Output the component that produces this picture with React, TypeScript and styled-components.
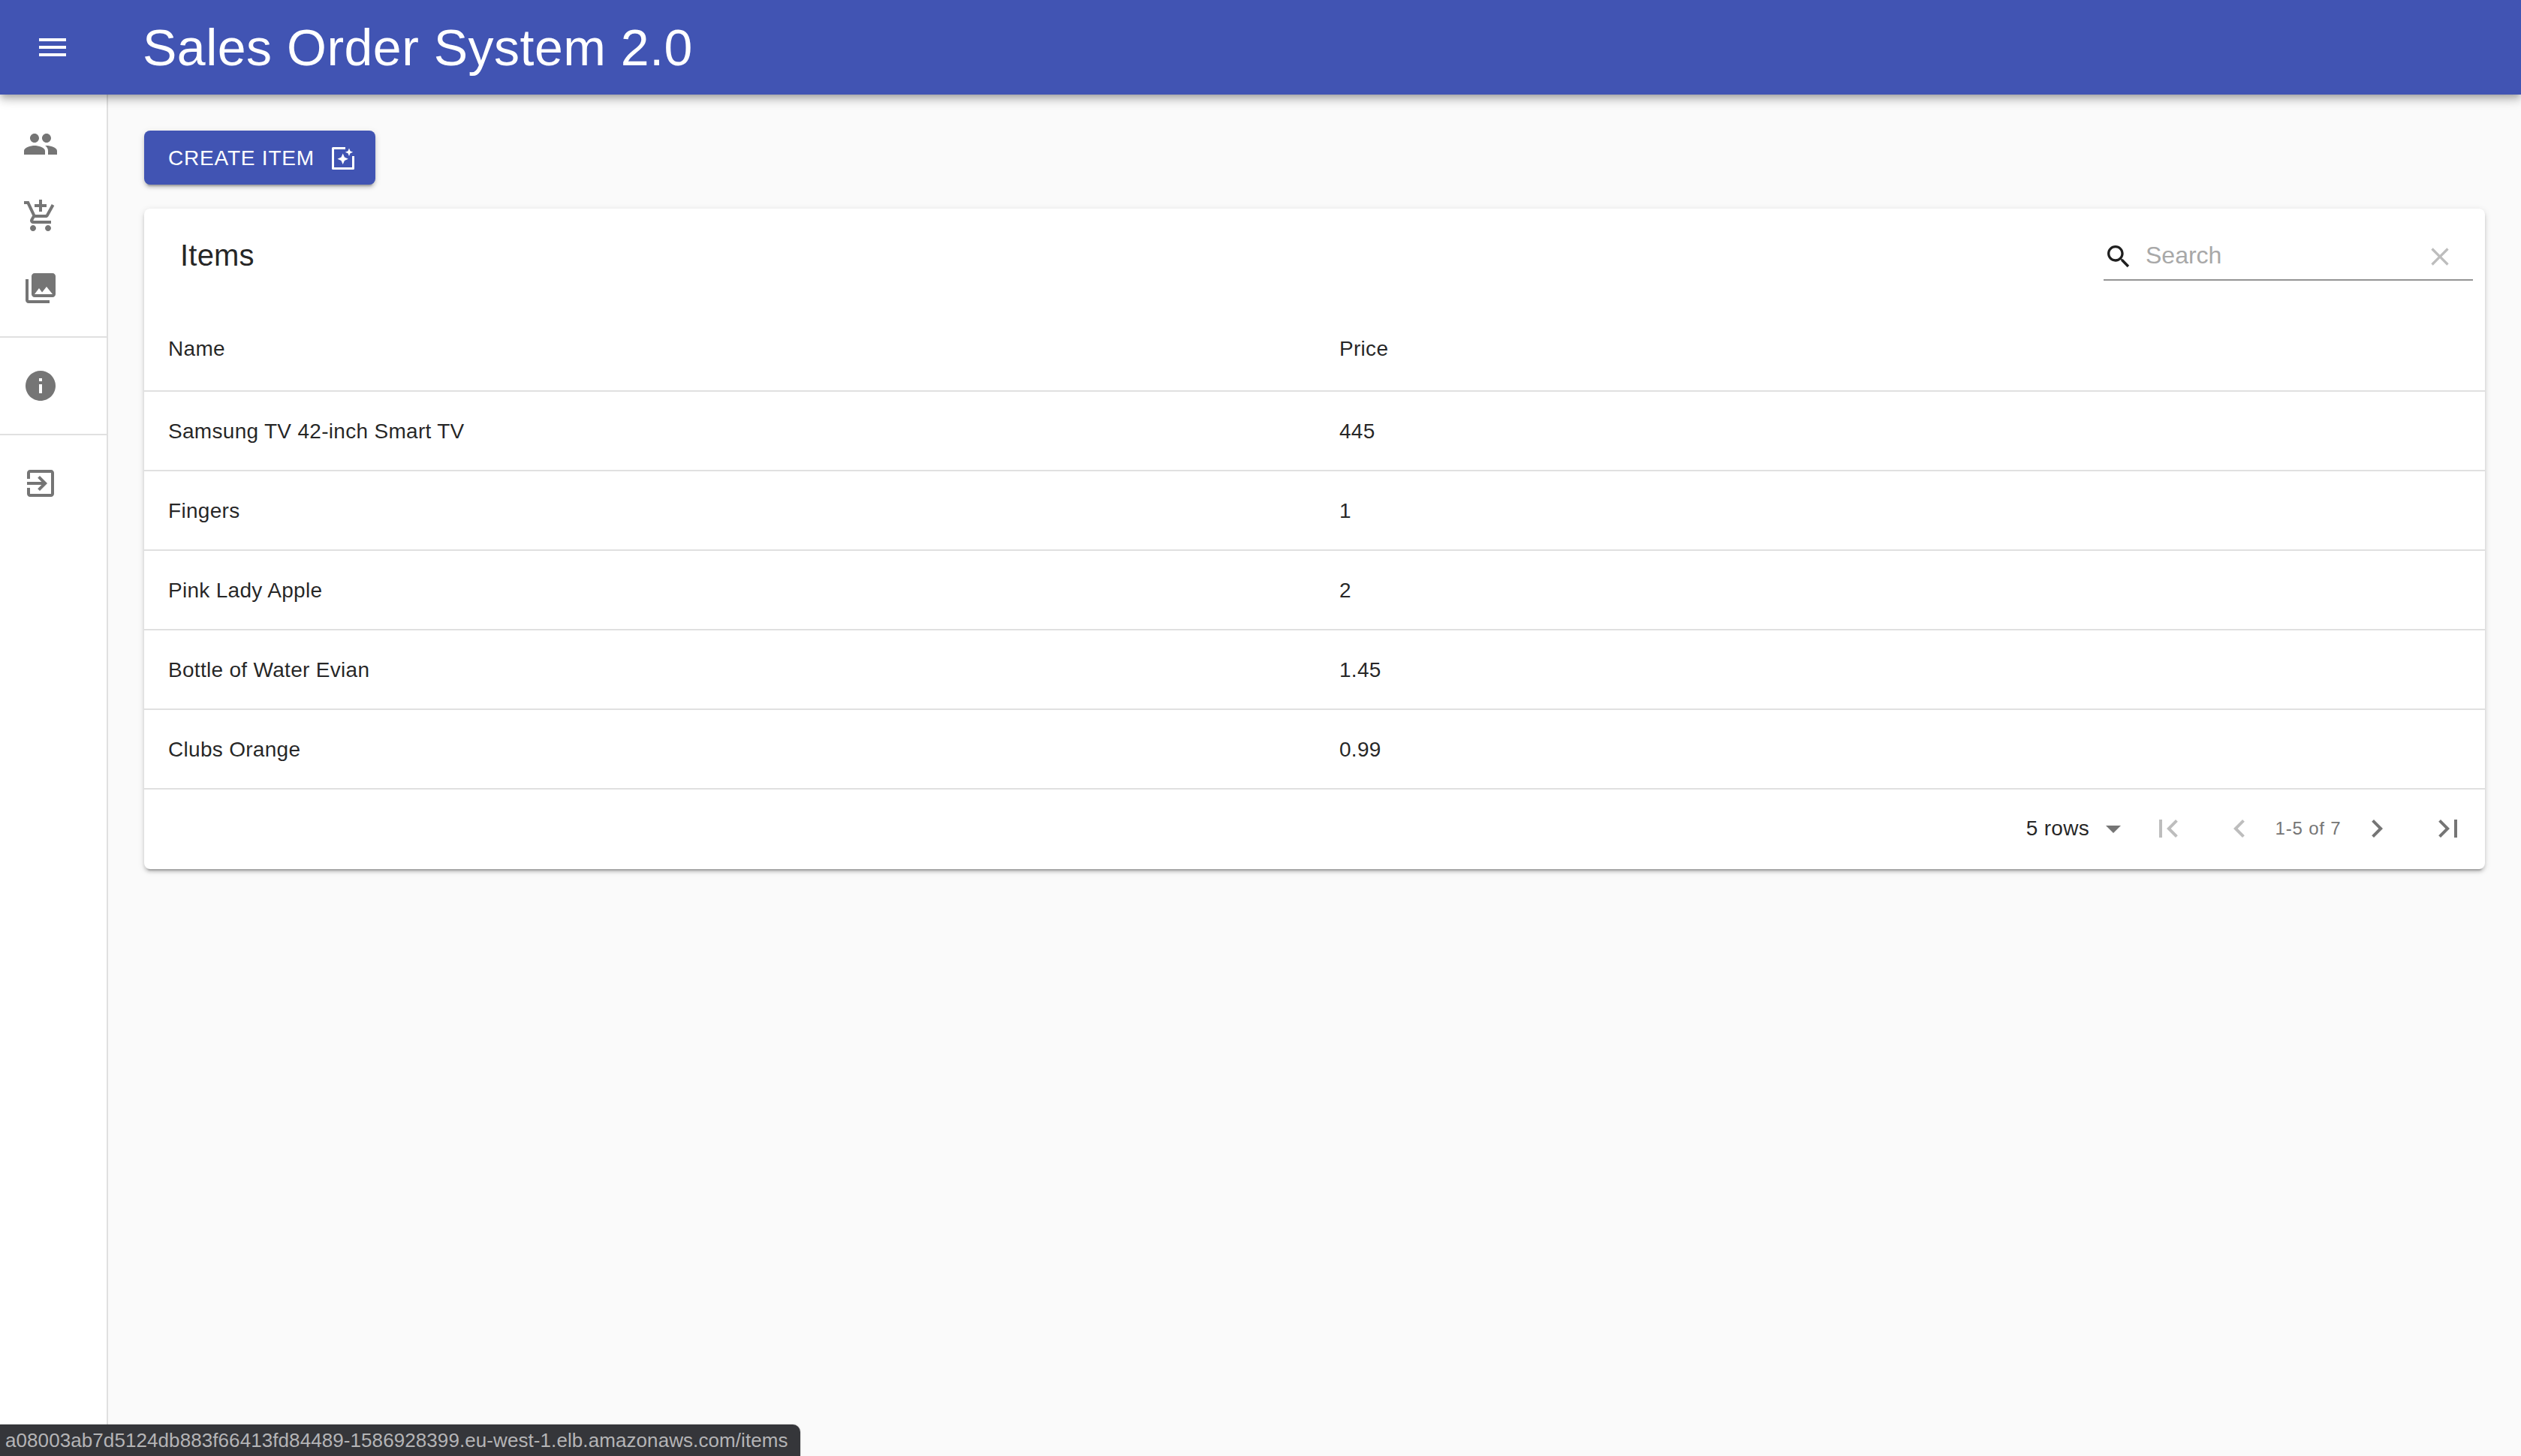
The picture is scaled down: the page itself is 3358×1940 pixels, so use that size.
import { ReactNode } from 'react';
import styled, { createGlobalStyle } from 'styled-components';

const GlobalStyle = createGlobalStyle`
  html, body {
    margin: 0;
    padding: 0;
    background: #fafafa;
    font-family: 'Liberation Sans', Arial, sans-serif;
    color: rgba(0, 0, 0, 0.87);
  }
`;

const Page = styled.div`
  position: relative;
  display: flex;
  flex-direction: column;
  width: 3358px;
  height: 1940px;
  overflow: hidden;
`;

const AppBar = styled.header`
  position: relative;
  z-index: 2;
  display: flex;
  align-items: center;
  flex: 0 0 126px;
  padding-left: 46px;
  background: #4154b3;
  color: #fff;
  box-shadow: 0 4px 8px -2px rgba(0, 0, 0, 0.2), 0 8px 10px 0 rgba(0, 0, 0, 0.14), 0 2px 20px 0 rgba(0, 0, 0, 0.12);
`;

const AppTitle = styled.h1`
  margin: 0 0 0 96px;
  font-size: 68px;
  font-weight: 400;
  line-height: 1;
  letter-spacing: 0.5px;
`;

const Body = styled.div`
  display: flex;
  flex: 1;
  min-height: 0;
`;

const Drawer = styled.nav`
  flex: 0 0 144px;
  box-sizing: border-box;
  background: #fff;
  border-right: 2px solid #e0e0e0;
`;

const NavGroup = styled.div`
  padding: 16px 0;
  border-bottom: 2px solid #e0e0e0;
  &:first-child {
    padding-top: 18px;
  }
  &:last-child {
    border-bottom: 0;
  }
`;

const NavItem = styled.div`
  display: flex;
  align-items: center;
  height: 96px;
  padding-left: 30px;
  color: #757575;
`;

const Main = styled.main`
  flex: 1;
  min-width: 0;
  padding: 48px 48px 0;
`;

const CreateButton = styled.button`
  display: flex;
  align-items: center;
  gap: 21px;
  width: 308px;
  height: 72px;
  box-sizing: border-box;
  margin-bottom: 32px;
  padding: 1px 0 0 32px;
  border: 0;
  border-radius: 8px;
  background: #4154b3;
  color: #fff;
  font-family: inherit;
  font-size: 28px;
  letter-spacing: 0.8px;
  white-space: nowrap;
  box-shadow: 0 6px 2px -4px rgba(0, 0, 0, 0.2), 0 4px 4px 0 rgba(0, 0, 0, 0.14), 0 2px 10px 0 rgba(0, 0, 0, 0.12);
`;

const Card = styled.section`
  background: #fff;
  border-radius: 8px;
  box-shadow: 0 6px 2px -4px rgba(0, 0, 0, 0.2), 0 4px 4px 0 rgba(0, 0, 0, 0.14), 0 2px 10px 0 rgba(0, 0, 0, 0.12);
`;

const Toolbar = styled.div`
  display: flex;
  align-items: center;
  justify-content: space-between;
  height: 128px;
  padding: 0 16px 0 48px;
`;

const CardTitle = styled.h2`
  margin: 0 0 3px;
  font-size: 40px;
  font-weight: 400;
  letter-spacing: 0.2px;
`;

const SearchField = styled.div`
  display: flex;
  align-items: center;
  width: 492px;
  height: 62px;
  margin-top: 2px;
  box-sizing: border-box;
  padding: 0 24px 0 0;
  border-bottom: 2px solid #949494;
`;

const SearchIcon = styled.span`
  display: flex;
  margin-right: 16px;
  color: #1f1f1f;
`;

const SearchText = styled.span`
  flex: 1;
  margin-top: -4px;
  font-size: 32px;
  color: #a8a8a8;
`;

const ClearIcon = styled.span`
  display: flex;
  color: #bdbdbd;
`;

const Table = styled.table`
  width: 100%;
  table-layout: fixed;
  border-collapse: collapse;
`;

const NameCol = styled.col`
  width: 1560px;
`;

const HeadCell = styled.th`
  height: 115px;
  box-sizing: border-box;
  padding: 4px 32px 0;
  border-bottom: 2px solid #e0e0e0;
  text-align: left;
  font-size: 28px;
  font-weight: 400;
  letter-spacing: 0.3px;
`;

const Cell = styled.td`
  height: 106px;
  box-sizing: border-box;
  padding: 1px 32px 0;
  border-bottom: 2px solid #e0e0e0;
  font-size: 28px;
  letter-spacing: 0.3px;
`;

const Footer = styled.div`
  display: flex;
  align-items: center;
  justify-content: flex-end;
  height: 106px;
  padding: 0 25px 2px 0;
  box-sizing: border-box;
`;

const RowsLabel = styled.span`
  font-size: 28px;
  letter-spacing: 0.3px;
`;

const RowsArrow = styled.span`
  display: flex;
  margin: 0 25px 0 8px;
  color: #757575;
`;

const PagerButton = styled.span<{ $disabled?: boolean }>`
  display: flex;
  color: ${(p) => (p.$disabled ? '#bdbdbd' : '#757575')};
`;

const PagerSpacer = styled.span<{ $width: number }>`
  flex: 0 0 ${(p) => p.$width}px;
`;

const PageCount = styled.span`
  flex: 0 0 135px;
  text-align: center;
  font-size: 24px;
  letter-spacing: 0.8px;
  color: #757575;
`;

const StatusBubble = styled.div`
  position: absolute;
  left: 0;
  bottom: 0;
  width: 1066px;
  height: 42px;
  box-sizing: border-box;
  padding-left: 7px;
  background: #35363a;
  border-top-right-radius: 10px;
  box-shadow: 0 0 2px rgba(0, 0, 0, 0.3);
  color: #b4b4b6;
  font-size: 26px;
  letter-spacing: 0.08px;
  line-height: 42px;
  white-space: nowrap;
`;

const Icon = ({ size = 48, children }: { size?: number; children: ReactNode }) => (
  <svg width={size} height={size} viewBox="0 0 24 24" fill="currentColor">
    {children}
  </svg>
);

const rows = [
  { name: 'Samsung TV 42-inch Smart TV', price: '445' },
  { name: 'Fingers', price: '1' },
  { name: 'Pink Lady Apple', price: '2' },
  { name: 'Bottle of Water Evian', price: '1.45' },
  { name: 'Clubs Orange', price: '0.99' },
];

function App(): JSX.Element {
  return (
    <>
      <GlobalStyle />
      <Page>
        <AppBar>
          <Icon>
            <path d="M3 18h18v-2H3v2zm0-5h18v-2H3v2zm0-7v2h18V6H3z" />
          </Icon>
          <AppTitle>Sales Order System 2.0</AppTitle>
        </AppBar>
        <Body>
          <Drawer>
            <NavGroup>
              <NavItem>
                <Icon>
                  <path d="M16 11c1.66 0 2.99-1.34 2.99-3S17.66 5 16 5c-1.66 0-3 1.34-3 3s1.34 3 3 3zm-8 0c1.66 0 2.99-1.34 2.99-3S9.66 5 8 5C6.34 5 5 6.34 5 8s1.34 3 3 3zm0 2c-2.33 0-7 1.17-7 3.5V19h14v-2.5c0-2.33-4.67-3.5-7-3.5zm8 0c-.29 0-.62.02-.97.05 1.16.84 1.97 1.97 1.97 3.45V19h6v-2.5c0-2.33-4.67-3.5-7-3.5z" />
                </Icon>
              </NavItem>
              <NavItem>
                <Icon>
                  <path d="M11 9h2V6h3V4h-3V1h-2v3H8v2h3v3zm-4 9c-1.1 0-1.99.9-1.99 2S5.9 22 7 22s2-.9 2-2-.9-2-2-2zm10 0c-1.1 0-1.99.9-1.99 2s.89 2 1.99 2 2-.9 2-2-.9-2-2-2zm-9.83-3.25l.03-.12.9-1.63h7.45c.75 0 1.41-.41 1.75-1.03l3.86-7.01L19.42 4h-.01l-1.1 2-2.76 5H8.53l-.13-.27L6.16 6l-.95-2-.94-2H1v2h2l3.6 7.59-1.35 2.45c-.16.28-.25.61-.25.96 0 1.1.9 2 2 2h12v-2H7.42c-.13 0-.25-.11-.25-.25z" />
                </Icon>
              </NavItem>
              <NavItem>
                <Icon>
                  <path d="M22 16V4c0-1.1-.9-2-2-2H8c-1.1 0-2 .9-2 2v12c0 1.1.9 2 2 2h12c1.1 0 2-.9 2-2zm-11-4l2.03 2.71L16 11l4 5H8l3-4zM2 6v14c0 1.1.9 2 2 2h14v-2H4V6H2z" />
                </Icon>
              </NavItem>
            </NavGroup>
            <NavGroup>
              <NavItem>
                <Icon>
                  <path d="M12 2C6.48 2 2 6.48 2 12s4.48 10 10 10 10-4.48 10-10S17.52 2 12 2zm1 15h-2v-6h2v6zm0-8h-2V7h2v2z" />
                </Icon>
              </NavItem>
            </NavGroup>
            <NavGroup>
              <NavItem>
                <Icon>
                  <path d="M10.09 15.59L11.5 17l5-5-5-5-1.41 1.41L12.67 11H3v2h9.67l-2.58 2.59zM19 3H5c-1.11 0-2 .9-2 2v4h2V5h14v14H5v-4H3v4c0 1.1.89 2 2 2h14c1.1 0 2-.9 2-2V5c0-1.1-.9-2-2-2z" />
                </Icon>
              </NavItem>
            </NavGroup>
          </Drawer>
          <Main>
            <CreateButton>
              CREATE ITEM
              <svg width="32" height="32" viewBox="0 0 32 32" fill="none">
                <path d="M20 2.500H3.500V29.500H30.500V13" stroke="currentColor" strokeWidth="3" strokeLinejoin="round" />
                <path d="M16.700 9.500l2.200 5 5 2.200-5 2.200-2.200 5-2.200-5-5-2.200 5-2.200z" fill="currentColor" />
                <path d="M25 2.500l1.500 3.700 3.700 1.500-3.700 1.500-1.500 3.700-1.500-3.700-3.700-1.500 3.700-1.500z" fill="currentColor" />
              </svg>
            </CreateButton>
            <Card>
              <Toolbar>
                <CardTitle>Items</CardTitle>
                <SearchField>
                  <SearchIcon>
                    <Icon size={40}>
                      <path d="M15.5 14h-.79l-.28-.27C15.41 12.59 16 11.11 16 9.5 16 5.91 13.09 3 9.5 3S3 5.91 3 9.5 5.91 16 9.5 16c1.61 0 3.09-.59 4.23-1.57l.27.28v.79l5 4.99L20.49 19l-4.99-5zm-6 0C7.01 14 5 11.99 5 9.5S7.01 5 9.5 5 14 7.01 14 9.5 11.99 14 9.500 14z" />
                    </Icon>
                  </SearchIcon>
                  <SearchText>Search</SearchText>
                  <ClearIcon>
                    <Icon size={40}>
                      <path d="M19 6.410L17.590 5 12 10.590 6.410 5 5 6.410 10.590 12 5 17.590 6.410 19 12 13.410 17.590 19 19 17.590 13.410 12z" />
                    </Icon>
                  </ClearIcon>
                </SearchField>
              </Toolbar>
              <Table>
                <colgroup>
                  <NameCol />
                  <col />
                </colgroup>
                <thead>
                  <tr>
                    <HeadCell>Name</HeadCell>
                    <HeadCell>Price</HeadCell>
                  </tr>
                </thead>
                <tbody>
                  {rows.map((row) => (
                    <tr key={row.name}>
                      <Cell>{row.name}</Cell>
                      <Cell>{row.price}</Cell>
                    </tr>
                  ))}
                </tbody>
              </Table>
              <Footer>
                <RowsLabel>5 rows</RowsLabel>
                <RowsArrow>
                  <Icon>
                    <path d="M7 10l5 5 5-5z" />
                  </Icon>
                </RowsArrow>
                <PagerButton $disabled>
                  <Icon>
                    <path d="M18.41 16.59L13.82 12l4.59-4.590L17 6l-6 6 6 6zM6 6h2v12H6z" />
                  </Icon>
                </PagerButton>
                <PagerSpacer $width={47} />
                <PagerButton $disabled>
                  <Icon>
                    <path d="M15.41 7.41L14 6l-6 6 6 6 1.410-1.410L10.830 12z" />
                  </Icon>
                </PagerButton>
                <PageCount>1-5 of 7</PageCount>
                <PagerButton>
                  <Icon>
                    <path d="M10 6L8.590 7.410 13.170 12l-4.580 4.590L10 18l6-6z" />
                  </Icon>
                </PagerButton>
                <PagerSpacer $width={47} />
                <PagerButton>
                  <Icon>
                    <path d="M5.590 7.410L10.180 12l-4.590 4.590L7 18l6-6-6-6zM16 6h2v12h-2z" />
                  </Icon>
                </PagerButton>
              </Footer>
            </Card>
          </Main>
        </Body>
        <StatusBubble>a08003ab7d5124db883f66413fd84489-1586928399.eu-west-1.elb.amazonaws.com/items</StatusBubble>
      </Page>
    </>
  );
}

export default App;
